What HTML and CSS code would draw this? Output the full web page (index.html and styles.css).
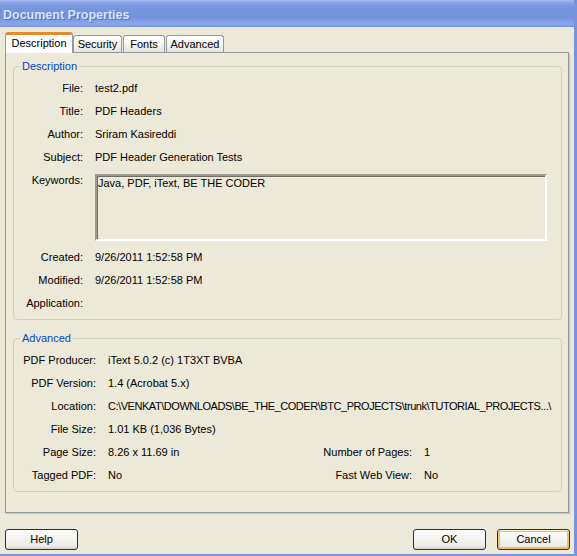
FILE: index.html
```html
<!DOCTYPE html>
<html lang="en">
<head>
    <meta charset="UTF-8">
    <title>Document Properties</title>
    <link rel="stylesheet" href="styles.css">
</head>
<body>
    <div class="window">
        <div class="titlebar">
            <span>Document Properties</span>
        </div>

        <div class="client">
            <div class="tabs">
                <div class="tab tab-active">Description</div>
                <div class="tab tab-security">Security</div>
                <div class="tab tab-fonts">Fonts</div>
                <div class="tab tab-advanced">Advanced</div>
            </div>

            <div class="panel">
                <fieldset class="group">
                    <legend>Description</legend>
                    <div class="desc-grid">
                        <div class="label">File:</div>
                        <div class="value">test2.pdf</div>
                        <div class="label">Title:</div>
                        <div class="value">PDF Headers</div>
                        <div class="label">Author:</div>
                        <div class="value">Sriram Kasireddi</div>
                        <div class="label">Subject:</div>
                        <div class="value">PDF Header Generation Tests</div>
                        <div class="label">Keywords:</div>
                        <div class="value">
                            <div class="textbox">Java, PDF, iText, BE THE CODER</div>
                        </div>
                        <div class="label">Created:</div>
                        <div class="value">9/26/2011 1:52:58 PM</div>
                        <div class="label">Modified:</div>
                        <div class="value">9/26/2011 1:52:58 PM</div>
                        <div class="label">Application:</div>
                        <div class="value"></div>
                    </div>
                </fieldset>

                <fieldset class="group group-advanced">
                    <legend>Advanced</legend>
                    <div class="adv-grid">
                        <div class="label">PDF Producer:</div>
                        <div class="value span-rest">iText 5.0.2 (c) 1T3XT BVBA</div>
                        <div class="label">PDF Version:</div>
                        <div class="value span-rest">1.4 (Acrobat 5.x)</div>
                        <div class="label">Location:</div>
                        <div class="value span-rest location">C:\VENKAT\DOWNLOADS\BE_THE_CODER\BTC_PROJECTS\trunk\TUTORIAL_PROJECTS...\</div>
                        <div class="label">File Size:</div>
                        <div class="value span-rest">1.01 KB (1,036 Bytes)</div>
                        <div class="label">Page Size:</div>
                        <div class="value">8.26 x 11.69 in</div>
                        <div class="label">Number of Pages:</div>
                        <div class="value">1</div>
                        <div class="label">Tagged PDF:</div>
                        <div class="value">No</div>
                        <div class="label">Fast Web View:</div>
                        <div class="value">No</div>
                    </div>
                </fieldset>
            </div>

            <div class="buttons">
                <div class="btn btn-help">Help</div>
                <div class="btn">OK</div>
                <div class="btn btn-default">Cancel</div>
            </div>
        </div>
    </div>
</body>
</html>
```

FILE: styles.css
```css
* {
    margin: 0;
    padding: 0;
    box-sizing: border-box;
}

body {
    width: 577px;
    height: 556px;
    overflow: hidden;
    background-color: #7a96df;
    font-family: "Liberation Sans", Arial, sans-serif;
    font-size: 11px;
    color: #000000;
}

.window {
    width: 577px;
    height: 556px;
    border-right: 3px solid #7b93dc;
    border-bottom: 2px solid #7b93dc;
    background-color: #ece9d8;
    display: flex;
    flex-direction: column;
}

.titlebar {
    height: 27px;
    padding-left: 3px;
    display: flex;
    align-items: center;
    background: linear-gradient(to bottom, #a7bcef 0, #8ea9e9 2px, #7896df 6px, #7592dd 17px, #819fe5 21px, #8aa7ea 24px, #7592dd 27px);
}

.titlebar span {
    font-weight: bold;
    font-size: 12.5px;
    color: #d8e4f8;
    text-shadow: 1px 1px 0 #5571c4;
    margin-top: 2px;
}

.client {
    flex: 1;
    padding: 5px 4px 0 5px;
}

/* tab strip */
.tabs {
    display: flex;
    align-items: flex-end;
    height: 21px;
    margin-bottom: -1px;
    position: relative;
    z-index: 1;
}

.tab {
    height: 17px;
    line-height: 16px;
    text-align: center;
    border: 1px solid #919b9c;
    border-bottom: none;
    border-radius: 3px 3px 0 0;
    background: linear-gradient(to bottom, #ffffff, #f3f3ef 60%, #e4e2d8);
    margin-bottom: 1px;
}

.tab-active {
    width: 68px;
    height: 21px;
    line-height: 17px;
    margin-bottom: 0;
    background: #fcfcfe;
    border-top: 3px solid #f1a33a;
    border-color: #e68b2c #919b9c #919b9c #919b9c;
}

.tab-security {
    width: 49px;
}

.tab-fonts {
    width: 42px;
    margin-left: 1px;
}

.tab-advanced {
    width: 58px;
    margin-left: 1px;
}

/* tab page */
.panel {
    width: 564px;
    border: 1px solid #919b9c;
    box-shadow: 1px 1px 0 #d0cdbd, 2px 2px 0 #e3e0d0;
    padding: 6px 6px 20px 7px;
}

.group {
    border: 1px solid #d0d0bf;
    border-radius: 4px;
    padding: 4px 0;
}

.group legend {
    color: #0046d5;
    line-height: 14px;
    padding: 0 2px;
    margin-left: 6px;
}

.group-advanced {
    margin-top: 11px;
}

.label {
    text-align: right;
    line-height: 23px;
    white-space: nowrap;
}

.value {
    line-height: 23px;
    white-space: nowrap;
}

.desc-grid {
    display: grid;
    grid-template-columns: 69px 1fr;
    grid-template-rows: 23px 23px 23px 23px 77px 23px 23px 23px;
    column-gap: 12px;
}

.textbox {
    margin-top: 5px;
    width: 452px;
    height: 67px;
    border: 2px solid;
    border-color: #9d9b8f #ffffff #ffffff #9d9b8f;
    box-shadow: inset 1px 1px 0 #716f64;
    padding-left: 1px;
    line-height: 14px;
}

.adv-grid {
    display: grid;
    grid-template-columns: 82px 188px 104px 1fr;
    grid-auto-rows: 23px;
    column-gap: 12px;
}

.adv-grid .span-rest {
    grid-column: 2 / 5;
}

.location {
    letter-spacing: -0.45px;
}

/* bottom buttons */
.buttons {
    display: flex;
    margin-top: 16px;
}

.btn {
    width: 73px;
    height: 21px;
    line-height: 19px;
    text-align: center;
    border: 1px solid #003c74;
    border-radius: 3px;
    background: linear-gradient(to bottom, #ffffff, #f4f4f0 40%, #ecebe6 85%, #d6d0c5);
    cursor: pointer;
}

.btn-help {
    margin-right: auto;
}

.btn-default {
    margin-left: 11px;
    box-shadow: inset 0 1px 0 #fff0cf, inset 0 0 0 2px #f0c05a;
}
```
